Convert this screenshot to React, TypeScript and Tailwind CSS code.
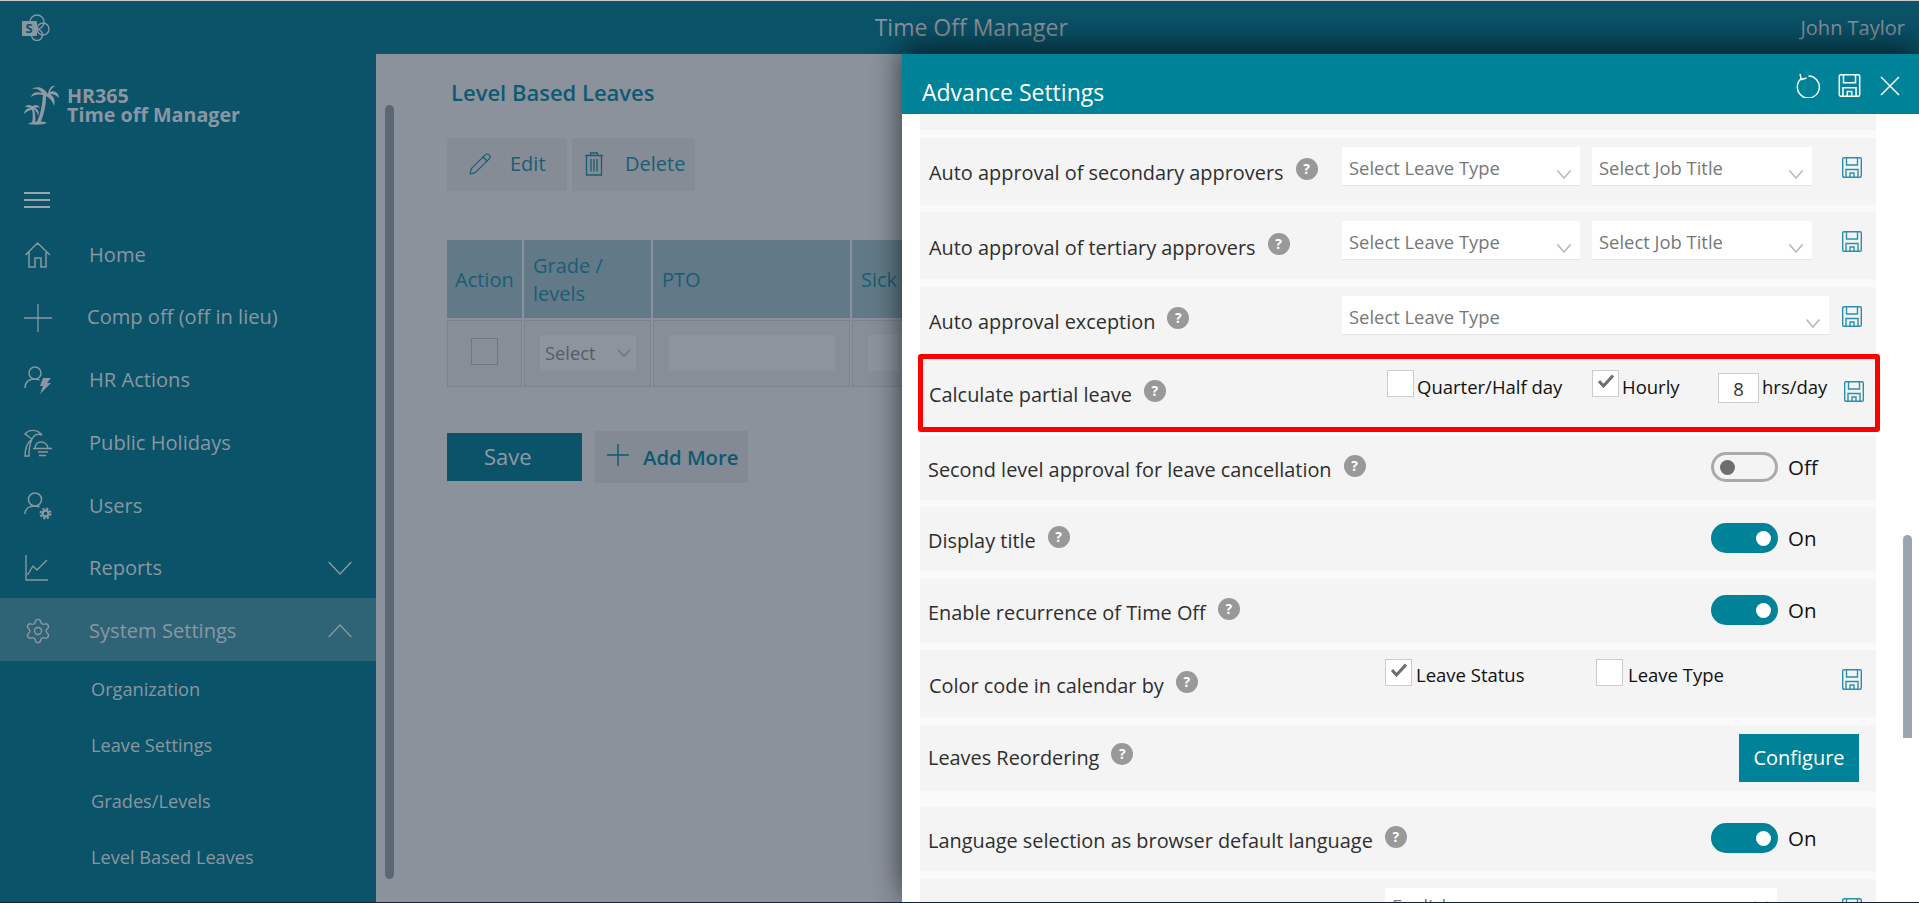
import type { ReactNode } from "react";
import { Pencil, Settings } from "lucide-react";

const Floppy = ({ className = "" }: { className?: string }) => (
  <svg viewBox="0 0 20 21" fill="none" stroke="currentColor" strokeWidth="1.4" className={className}>
    <path d="M2 .7H18A1.3 1.3 0 0 1 19.3 2V19A1.3 1.3 0 0 1 18 20.3H2A1.3 1.3 0 0 1 .7 19V2A1.3 1.3 0 0 1 2 .7Z" />
    <path d="M4.5 .7V8H15.5V.7" />
    <path d="M4 20.3V12.5H16V20.3" />
    <path d="M8 20.3V16H12V20.3" />
  </svg>
);

const RowSave = ({ className = "" }: { className?: string }) => (
  <Floppy className={`w-5 h-[21px] shrink-0 text-[#2a8fad] ${className}`} />
);

const Help = ({ className = "" }: { className?: string }) => (
  <span className={`w-[22px] h-[22px] rounded-full bg-[#999999] text-white font-bold text-[14px] leading-[22px] text-center shrink-0 ${className}`}>?</span>
);

const Label = ({ text }: { text: string }) => (
  <div className="flex items-start">
    <span className="text-[19.9px] leading-7 text-[#2e2e2e] whitespace-nowrap">{text}</span>
    <Help className="mt-[-1px] ml-3" />
  </div>
);

const LeaveSelect = ({ text, width, top = false }: { text: string; width: string; top?: boolean }) => (
  <div className={`h-[39px] bg-white border-b border-[#e4e4e4] flex justify-between pl-[7px] pr-[9px] ${width}`}>
    <span className={`text-[18.4px] text-[#777777] whitespace-nowrap ${top ? "leading-[36px]" : "leading-[42px]"}`}>{text}</span>
    <svg viewBox="0 0 14 9" className={`w-[14px] h-[9px] ${top ? "mt-[13px]" : "mt-[23px]"}`} fill="none" stroke="#bbbbbb" strokeWidth="1.6">
      <path d="M.6.6 7 8 13.4.6" />
    </svg>
  </div>
);

const Check = ({ on = false }: { on?: boolean }) => (
  <span className="w-[27px] h-[27px] bg-white border border-[#cccccc] shrink-0 flex items-center justify-center">
    {on && (
      <svg viewBox="0 0 16 14" className="w-[16px] h-[14px] mb-[6px]" fill="none" stroke="#6e6e6e" strokeWidth="3">
        <path d="M1 7 5.5 12 15 1.5" />
      </svg>
    )}
  </span>
);

const Toggle = ({ on }: { on: boolean }) => (
  <div className="w-[165px] pt-4 flex items-start">
    {on ? (
      <span className="w-[67px] h-[30px] rounded-full bg-[#008299] flex items-center justify-end pr-[7px]">
        <span className="w-[15px] h-[15px] rounded-full bg-white" />
      </span>
    ) : (
      <span className="w-[67px] h-[30px] rounded-full border-[3px] border-[#aaaaaa] flex items-center pl-[6px]">
        <span className="w-[15px] h-[15px] rounded-full bg-[#6e6e6e]" />
      </span>
    )}
    <span className="ml-[10px] text-[20.5px] leading-[30px] text-[#111111]">{on ? "On" : "Off"}</span>
  </div>
);

function SelectRow({ label, labelClass, mt, children }: { label: string; labelClass: string; mt: string; children: ReactNode }) {
  return (
    <div className={`h-[67px] bg-[#f4f4f4] flex justify-between ${mt}`}>
      <div className={labelClass}>
        <Label text={label} />
      </div>
      <div className="flex items-start pt-[9px] pr-[14px]">{children}</div>
    </div>
  );
}

function ToggleRow({ label, on, mt }: { label: string; on: boolean; mt: string }) {
  return (
    <div className={`h-16 bg-[#f4f4f4] flex justify-between ${mt}`}>
      <div className="pl-2 pt-5">
        <Label text={label} />
      </div>
      <Toggle on={on} />
    </div>
  );
}

const ic = "w-7 h-7 shrink-0";
const navIcons: Record<string, ReactNode> = {
  Home: (
    <svg viewBox="0 0 28 28" className={ic} fill="none" stroke="currentColor" strokeWidth="1.5">
      <path d="M1.5 14 13.5 2 26 14M5 11V26H11V17H17V26H22V11" />
    </svg>
  ),
  Comp: (
    <svg viewBox="0 0 28 28" className={ic} fill="none" stroke="currentColor" strokeWidth="1.3">
      <path d="M14 0V28M0 14H28" />
    </svg>
  ),
  HR: (
    <svg viewBox="0 0 28 28" className={ic} fill="none" stroke="currentColor" strokeWidth="1.5">
      <circle cx="11" cy="7" r="6" />
      <path d="M1 22C1 16 5 13 11 13c2 0 3 .3 4.500 1" />
      <path d="M19 12H27L23 17H27L16 28 19 20H16Z" fill="currentColor" stroke="none" />
    </svg>
  ),
  Holiday: (
    <svg viewBox="0 0 28 28" className={ic} fill="none" stroke="currentColor" strokeWidth="1.4">
      <path d="M1 5C5 0 13 0 18 6 13 4 10 6 8 10 6 14 5 20 5 27H1C1 21 3 14 8 10 5 8 3 6 1 5Z" />
      <path d="M11 19C12 11 22 11 24 19M9 19.500H28M14 23H24M15 26.500H22" />
    </svg>
  ),
  Users: (
    <svg viewBox="0 0 28 28" className={ic} fill="none" stroke="currentColor" strokeWidth="1.5">
      <circle cx="11" cy="7.500" r="6.500" />
      <path d="M1 22C1 17 5 14 11 14c2 0 3 .3 4.500 1" />
      <circle cx="21.500" cy="21.500" r="3" strokeWidth="2.400" />
      <circle cx="21.500" cy="21.500" r="5" strokeWidth="2" strokeDasharray="2.200 1.730" />
    </svg>
  ),
  Reports: (
    <svg viewBox="0 0 28 28" className={ic} fill="none" stroke="currentColor" strokeWidth="1.4">
      <path d="M2 1V26H24M3.500 21 9 12 13 16 23 6" />
    </svg>
  ),
  System: <Settings className={ic} strokeWidth={1.2} />,
};

const nav = [
  { key: "Home", text: "Home" },
  { key: "Comp", text: "Comp off (off in lieu)", textClass: "ml-[35px]" },
  { key: "HR", text: "HR Actions" },
  { key: "Holiday", text: "Public Holidays" },
  { key: "Users", text: "Users" },
  { key: "Reports", text: "Reports", chevron: "M.7 1 12 13 23.300 1" },
  { key: "System", text: "System Settings", chevron: "M.7 13 12 1 23.300 13", active: true },
];

export default function App() {
  return (
    <div className="h-screen w-full flex flex-col overflow-hidden font-['Open_Sans',sans-serif] bg-[#8b929c]">
      <div className="h-px bg-[#c9c9c9]" />

      {/* Header */}
      <div className="h-[53px] bg-[#0b5369] flex items-center justify-between text-[#8a939c] pl-[22px] pr-[14px]">
        <svg viewBox="0 0 28 27" className="w-7 h-[27px]">
          <circle cx="15" cy="8" r="7" fill="none" stroke="#8a97a2" strokeWidth="1.400" />
          <circle cx="21" cy="15" r="6" fill="none" stroke="#8a97a2" strokeWidth="1.400" />
          <circle cx="15" cy="21" r="5.500" fill="none" stroke="#8a97a2" strokeWidth="1.400" />
          <rect x="0" y="7" width="15" height="15" rx="1" fill="#8a97a2" />
          <text x="3.500" y="19" fontSize="13" fontWeight="700" fill="#0b5369">S</text>
        </svg>
        <span className="text-[23px] ml-[92px]">Time Off Manager</span>
        <span className="text-[20px]">John Taylor</span>
      </div>

      <div className="flex-1 flex min-h-0">
        {/* Sidebar */}
        <div className="w-[376px] shrink-0 bg-[#0b5369] text-[#8a97a2]">
          <div className="flex items-start pt-[31px] pl-[23px] h-[138px]">
            <svg viewBox="0 0 38 40" className="w-[38px] h-10 shrink-0" fill="#8f9aa5">
              <path d="M25 9C20 1 12 1 9 4 14 3 17 5 19 8 13 6 9 8 8 12 12 9 17 9 20 10 19 20 18 30 13 38H17C21 30 23 20 23 11 27 13 30 17 31 21 33 15 30 11 27 9 31 9 34 11 36 13 36 8 31 5 27 7 28 4 30 2 32 1 29 0 26 3 25 9Z" />
              <path d="M9 21C6 19 3 20 2 22 4 22 6 22 7 23 4 23 1 26 1 29 3 27 6 25 9 25 10 29 10 33 9 38H12C13 33 12 28 11 24 13 26 15 29 15 31 17 28 15 24 12 23 14 22 16 22 17 23 16 20 12 19 10 21Z" />
              <path d="M5 39C10 36 20 36 24 38 20 40 10 40 5 39Z" />
            </svg>
            <div className="ml-[6px] font-bold leading-[19px] text-[#8a97a2] pt-px">
              <div className="text-[19.7px]">HR365</div>
              <div className="text-[19.7px] whitespace-nowrap">Time off Manager</div>
            </div>
          </div>
          <div className="pl-6 h-[30px] flex flex-col gap-[5px]">
            <div className="w-[26px] h-[2px] bg-[#9aa5ae]" />
            <div className="w-[26px] h-[2px] bg-[#9aa5ae]" />
            <div className="w-[26px] h-[2px] bg-[#9aa5ae]" />
          </div>
          {nav.map((n) => (
            <div key={n.key} className={`h-[62.700px] flex items-center pt-[3px] pl-6 pr-6 ${n.active ? "bg-[#2e6476]" : ""}`}>
              {navIcons[n.key]}
              <span className={`text-[20.100px] flex-1 whitespace-nowrap ${n.textClass ?? "ml-[37px]"}`}>{n.text}</span>
              {n.chevron && (
                <svg viewBox="0 0 24 14" className="w-6 h-[14px]" fill="none" stroke="currentColor" strokeWidth="1.4">
                  <path d={n.chevron} />
                </svg>
              )}
            </div>
          ))}
          {["Organization", "Leave Settings", "Grades/Levels", "Level Based Leaves"].map((s) => (
            <div key={s} className="h-14 flex items-center pl-[91px] pt-px text-[18.200px] whitespace-nowrap">{s}</div>
          ))}
        </div>

        {/* Page under the panel */}
        <div className="flex-1 relative min-w-0">
          <div className="absolute left-[9px] top-[51px] w-[9px] h-[774px] rounded-full bg-[#5b6774]" />
          <div className="h-full overflow-hidden pl-[71px] pt-6">
            <div className="pl-1 text-[22px] leading-7 font-semibold text-[#0f5a72] whitespace-nowrap">Level Based Leaves</div>
            <div className="flex gap-[5px] mt-8 text-[#1a5d75]">
              <div className="w-[120px] h-[53px] bg-[#858c96] flex items-center pl-[21px] pb-px">
                <Pencil size={24} strokeWidth={1.2} />
                <span className="ml-[18px] text-[20px]">Edit</span>
              </div>
              <div className="w-[123px] h-[53px] bg-[#858c96] flex items-center pl-3 pb-px">
                <svg viewBox="0 0 20 24" className="w-5 h-6" fill="none" stroke="currentColor" strokeWidth="1.3">
                  <path d="M1 3.500H19M6.500 3.500V1H13.500V3.500M2.500 3.500V23H17.500V3.500M7 7V19.500M10 7V19.500M13 7V19.500" />
                </svg>
                <span className="ml-[21px] text-[20px]">Delete</span>
              </div>
            </div>

            <div className="mt-[49px] grid grid-cols-[75px_127px_197px_200px] gap-[2px] text-[#1a5d75] text-[20px]">
              <div className="h-[78px] bg-[#627a87] flex items-center pl-2 pt-[2px]">Action</div>
              <div className="h-[78px] bg-[#627a87] flex items-center pl-[9px] leading-7 pt-[2px]">Grade /<br />levels</div>
              <div className="h-[78px] bg-[#627a87] flex items-center pl-[9px] pt-[2px]">PTO</div>
              <div className="h-[78px] bg-[#627a87] flex items-center pl-[9px] pt-[2px]">Sick</div>
              <div className="h-[67px] bg-[#878e98] border border-[#7b838d] flex justify-center pt-[17px]">
                <span className="w-[27px] h-[27px] border border-[#6f7680]" />
              </div>
              <div className="h-[67px] bg-[#878e98] border border-[#7b838d] pl-[15px] pt-[14px]">
                <div className="w-[96px] h-9 bg-[#8d949e] flex items-center justify-between pl-[5px] pr-[5px] text-[#555d66] text-[18.300px]">
                  Select
                  <svg viewBox="0 0 14 8" className="w-[14px] h-2" fill="none" stroke="#6b727c" strokeWidth="1.300">
                    <path d="M.6.6 7 7 13.400.6" />
                  </svg>
                </div>
              </div>
              <div className="h-[67px] bg-[#878e98] border border-[#7b838d] pl-[15px] pt-[14px]">
                <div className="w-[166px] h-9 bg-[#8d949e]" />
              </div>
              <div className="h-[67px] bg-[#878e98] border border-[#7b838d] pl-[15px] pt-[14px]">
                <div className="w-[166px] h-9 bg-[#8d949e]" />
              </div>
            </div>

            <div className="mt-[44px] flex items-center gap-[13px]">
              <div className="w-[135px] h-12 bg-[#0b5369] text-[#8e9ba6] text-[22px] flex items-center pl-[37px] pb-px">Save</div>
              <div className="w-[153px] h-[52px] bg-[#838a94] flex items-center pl-3 text-[#0d5970]">
                <svg viewBox="0 0 22 22" className="w-[22px] h-[22px] mb-1" fill="none" stroke="currentColor" strokeWidth="1.400">
                  <path d="M11 0V22M0 11H22" />
                </svg>
                <span className="ml-[14px] text-[20.300px] font-semibold whitespace-nowrap">Add More</span>
              </div>
            </div>
          </div>

          {/* Advance Settings panel */}
          <div className="absolute left-[526px] right-0 top-0 bottom-0 bg-white overflow-hidden shadow-[0_-14px_30px_rgba(0,0,0,0.35),0_0_24px_rgba(0,0,0,0.35)] z-10">
            <div className="h-[60px] bg-[#008299] flex items-center justify-between pl-5 pr-[19px] text-white">
              <span className="text-[23px] mt-4">Advance Settings</span>
              <div className="flex items-center mt-[3px]">
                <svg viewBox="0 0 25 25" className="w-[25px] h-[25px]" fill="none" stroke="currentColor" strokeWidth="1.400">
                  <path d="M12.500 3A11 11 0 1 1 5 5.800M4 .8 5.300 6.500 10.500 5" />
                </svg>
                <Floppy className="w-[23px] h-[23px] ml-[17px]" />
                <svg viewBox="0 0 20 20" className="w-5 h-5 ml-[19px]" fill="none" stroke="currentColor" strokeWidth="1.500">
                  <path d="M1 1 19 19M19 1 1 19" />
                </svg>
              </div>
            </div>
            <div className="absolute left-[1001px] top-[481px] w-[9px] h-[203px] rounded-t-full rounded-b-md bg-[#9aa5ae]" />
            <div className="ml-[18px] w-[956px] bg-[#fafafa]">
              <div className="h-4 bg-[#f4f4f4]" />
              <SelectRow label="Auto approval of secondary approvers" labelClass="pl-[9px] pt-[21px]" mt="mt-2">
                <LeaveSelect text="Select Leave Type" width="w-[238px]" />
                <LeaveSelect text="Select Job Title" width="w-[220px] ml-3" />
                <RowSave className="ml-[30px] mt-[10px]" />
              </SelectRow>
              <SelectRow label="Auto approval of tertiary approvers" labelClass="pl-[9px] pt-[22px]" mt="mt-[7px]">
                <LeaveSelect text="Select Leave Type" width="w-[238px]" />
                <LeaveSelect text="Select Job Title" width="w-[220px] ml-3" />
                <RowSave className="ml-[30px] mt-[10px]" />
              </SelectRow>
              <SelectRow label="Auto approval exception" labelClass="pl-[9px] pt-[21px]" mt="mt-2">
                <LeaveSelect text="Select Leave Type" width="w-[487px]" />
                <RowSave className="ml-[13px] mt-[10px]" />
              </SelectRow>

              <div className="h-[78px] ml-[-2px] mr-[-4px] border-[5px] border-[#ff0000] rounded-[3px] bg-[#f4f4f4] flex justify-between">
                <div className="pl-[6px] pt-[22px]">
                  <Label text="Calculate partial leave" />
                </div>
                <div className="flex items-start pt-[11px] pr-[11px] text-[18.500px] text-[#111111]">
                  <Check />
                  <span className="w-[178px] pl-[3px] pt-[3px] leading-7 whitespace-nowrap">Quarter/Half day</span>
                  <Check on />
                  <span className="w-[99px] pl-[3px] pt-[3px] leading-7">Hourly</span>
                  <span className="w-[41px] h-[30px] mt-[3px] bg-white border border-[#cccccc] text-center leading-[29px] text-[#333333]">8</span>
                  <span className="w-[85px] pl-[3px] pt-[3px] leading-7 whitespace-nowrap">hrs/day</span>
                  <RowSave className="mt-[11px]" />
                </div>
              </div>

              <ToggleRow label="Second level approval for leave cancellation" on={false} mt="mt-1" />
              <ToggleRow label="Display title" on mt="mt-[7px]" />
              <ToggleRow label="Enable recurrence of Time Off" on mt="mt-2" />

              <div className="h-[67px] mt-[7px] bg-[#f4f4f4] flex justify-between">
                <div className="pl-[9px] pt-[22px]">
                  <Label text="Color code in calendar by" />
                </div>
                <div className="flex items-start pt-[9px] pr-[14px] text-[18.500px] text-[#111111]">
                  <Check on />
                  <span className="w-[184px] pl-1 pt-[2px] leading-7 whitespace-nowrap">Leave Status</span>
                  <Check />
                  <span className="w-[219px] pl-[5px] pt-[2px] leading-7 whitespace-nowrap">Leave Type</span>
                  <RowSave className="mt-[10px]" />
                </div>
              </div>

              <div className="h-[66px] mt-2 bg-[#f4f4f4] flex justify-between">
                <div className="pl-2 pt-[19px]">
                  <Label text="Leaves Reordering" />
                </div>
                <div className="pt-[9px] pr-[17px]">
                  <div className="w-[120px] h-12 bg-[#008299] text-white text-[20px] flex items-center justify-center">Configure</div>
                </div>
              </div>

              <ToggleRow label="Language selection as browser default language" on mt="mt-4" />

              <div className="h-[67px] mt-2 bg-[#f4f4f4] flex justify-end">
                <div className="flex items-start pt-[9px] pr-[14px]">
                  <LeaveSelect text="English" width="w-[392px]" top />
                  <RowSave className="ml-[65px] mt-[10px]" />
                </div>
              </div>
            </div>
          </div>
        </div>
      </div>
      <div className="h-px bg-[#13233a] relative z-20" />
    </div>
  );
}
